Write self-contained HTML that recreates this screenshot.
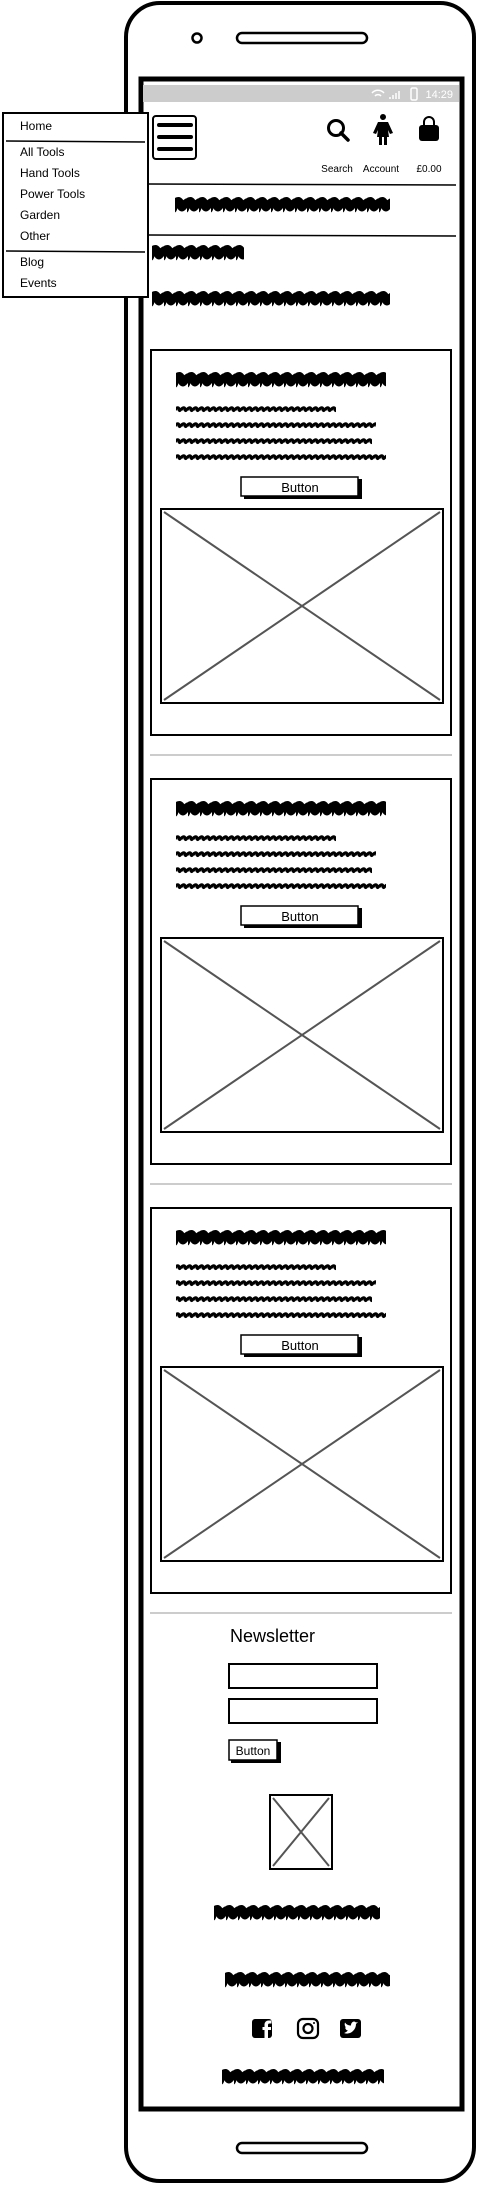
<!DOCTYPE html>
<html><head><meta charset="utf-8"><style>
html,body{margin:0;padding:0;background:#fff;width:478px;height:2187px;overflow:hidden}
svg{display:block}
text{font-family:"Liberation Sans",sans-serif;fill:#000}
</style></head><body>
<svg width="478" height="2187" viewBox="0 0 478 2187" xmlns="http://www.w3.org/2000/svg">
<defs>
<pattern id="big" x="0" y="0" width="12" height="22" patternUnits="userSpaceOnUse">
<path d="M-2,15 C1,5 5,5 6,12 C7,17 10,7 14,8" stroke="#000" stroke-width="8" fill="none" stroke-linecap="round"/>
</pattern>
<pattern id="sm" x="0" y="0" width="6" height="8" patternUnits="userSpaceOnUse">
<path d="M-1,5 C1,2 3,2 3,5 C4,7 5,3 7,3" stroke="#000" stroke-width="3" fill="none"/>
</pattern>
<g id="card">
<rect x="151" y="350" width="300" height="385" fill="#fff" stroke="#000" stroke-width="2"/>
<svg x="176" y="369" width="210" height="22" overflow="hidden"><rect width="210" height="22" fill="url(#big)"/></svg>
<svg x="176" y="405" width="160" height="8" overflow="hidden"><rect width="160" height="8" fill="url(#sm)"/></svg>
<svg x="176" y="421" width="200" height="8" overflow="hidden"><rect width="200" height="8" fill="url(#sm)"/></svg>
<svg x="176" y="437" width="196" height="8" overflow="hidden"><rect width="196" height="8" fill="url(#sm)"/></svg>
<svg x="176" y="453" width="210" height="8" overflow="hidden"><rect width="210" height="8" fill="url(#sm)"/></svg>
<rect x="244" y="479" width="118" height="20" fill="#000"/>
<rect x="241" y="477" width="117" height="19" fill="#fff" stroke="#000" stroke-width="1.5"/>
<text x="300" y="492" font-size="13" text-anchor="middle">Button</text>
<rect x="161" y="509" width="282" height="194" fill="#fff" stroke="#000" stroke-width="2"/>
<path d="M164,512 L440,700 M440,512 L164,700" stroke="#555" stroke-width="2"/>
<line x1="150" y1="755" x2="452" y2="755" stroke="#ccc" stroke-width="2"/>
</g>
</defs>

<rect x="126" y="3" width="348" height="2178" rx="34" fill="#fff" stroke="#000" stroke-width="4"/>
<circle cx="197" cy="38" r="4.5" fill="none" stroke="#000" stroke-width="2.5"/>
<rect x="237" y="33" width="130" height="10" rx="5" fill="none" stroke="#000" stroke-width="2.5"/>
<rect x="237" y="2143" width="130" height="10" rx="5" fill="none" stroke="#000" stroke-width="2.5"/>
<rect x="141" y="79" width="321" height="2030" fill="#fff" stroke="#000" stroke-width="5"/>
<rect x="143" y="85" width="316" height="17" fill="#ccc"/>
<text x="453" y="98" font-size="11" text-anchor="end" style="fill:#fff">14:29</text>
<path d="M372,93 a8,8 0 0 1 12,0 M375,96 a4,4 0 0 1 6,0" stroke="#fff" stroke-width="1.5" fill="none"/>
<path d="M390,99 v-2 M393,99 v-4 M396,99 v-6 M399,99 v-8" stroke="#fff" stroke-width="1.5"/>
<rect x="411" y="88" width="6" height="12" rx="1.5" fill="none" stroke="#fff" stroke-width="1.5"/>

<rect x="153" y="116" width="43" height="43" rx="3" fill="#fff" stroke="#000" stroke-width="2"/>
<path d="M159,125 h32 M159,137 h32 M159,149 h32" stroke="#000" stroke-width="4" stroke-linecap="round"/>
<circle cx="336" cy="128" r="7.5" fill="none" stroke="#000" stroke-width="3"/>
<path d="M341,133 l7,7" stroke="#000" stroke-width="3.5" stroke-linecap="round"/>
<circle cx="383" cy="117" r="3" fill="#000"/>
<path d="M378,122 h10 l5,11 l-3,1 l-2,-4 l1,7 h-2 v8 h-3 v-8 h-2 v8 h-3 v-8 h-2 l1,-7 l-2,4 l-3,-1 z" fill="#000"/>
<path d="M424,126 v-4 a5,5 0 0 1 10,0 v4" fill="none" stroke="#000" stroke-width="2"/>
<rect x="419" y="125" width="20" height="16" rx="3" fill="#000"/>
<text x="337" y="172" font-size="10" text-anchor="middle">Search</text>
<text x="381" y="172" font-size="10" text-anchor="middle">Account</text>
<text x="429" y="172" font-size="10" text-anchor="middle">£0.00</text>
<line x1="148" y1="184" x2="456" y2="185" stroke="#000" stroke-width="1.5"/>
<svg x="175" y="194" width="215" height="22" overflow="hidden"><rect width="215" height="22" fill="url(#big)"/></svg>
<line x1="148" y1="235" x2="456" y2="236" stroke="#000" stroke-width="1.5"/>
<svg x="152" y="242" width="92" height="22" overflow="hidden"><rect width="92" height="22" fill="url(#big)"/></svg>
<svg x="152" y="288" width="238" height="22" overflow="hidden"><rect width="238" height="22" fill="url(#big)"/></svg>

<use href="#card"/>
<use href="#card" transform="translate(0,429)"/>
<use href="#card" transform="translate(0,858)"/>

<text x="230" y="1642" font-size="18">Newsletter</text>
<rect x="229" y="1664" width="148" height="24" fill="#fff" stroke="#000" stroke-width="2"/>
<rect x="229" y="1699" width="148" height="24" fill="#fff" stroke="#000" stroke-width="2"/>
<rect x="231" y="1742" width="50" height="21" fill="#000"/>
<rect x="229" y="1740" width="48" height="20" fill="#fff" stroke="#000" stroke-width="1.5"/>
<text x="253" y="1755" font-size="12" text-anchor="middle">Button</text>
<rect x="270" y="1795" width="62" height="74" fill="#fff" stroke="#000" stroke-width="2"/>
<path d="M273,1798 L329,1866 M329,1798 L273,1866" stroke="#555" stroke-width="2"/>
<svg x="214" y="1902" width="166" height="22" overflow="hidden"><rect width="166" height="22" fill="url(#big)"/></svg>
<svg x="225" y="1969" width="165" height="22" overflow="hidden"><rect width="165" height="22" fill="url(#big)"/></svg>
<g transform="translate(0,47)">
<rect x="252" y="1972" width="20" height="19" rx="3" fill="#000"/>
<path d="M268,1991 v-8 h3 v-3 h-3 v-2 a1.5,1.5 0 0 1 1.5,-1.5 h2 v-3 h-3 a4,4 0 0 0 -4,4 v2.5 h-2 v3 h2 v8 z" fill="#fff"/>
<rect x="298" y="1972" width="20" height="19" rx="5" fill="none" stroke="#000" stroke-width="2.2"/>
<circle cx="308" cy="1981.5" r="4.5" fill="none" stroke="#000" stroke-width="2.2"/>
<circle cx="314" cy="1976" r="1" fill="#000"/>
<rect x="340" y="1972" width="21" height="19" rx="3" fill="#000"/>
<path d="M344,1986 q5,2 9,-2 q3,-3 3,-7 l2,-2 l-2,0.5 q-2,-2 -4,0 q-1,1 -1,3 q-4,0 -6,-3 q-1,3 1,5 l-1,0 q1,3 3,3 q-2,2 -4,2.5 z" fill="#fff"/>
</g>
<svg x="222" y="2066" width="162" height="22" overflow="hidden"><rect width="162" height="22" fill="url(#big)"/></svg>

<rect x="3" y="113" width="145" height="184" fill="#fff" stroke="#000" stroke-width="2"/>
<g font-size="12">
<text x="20" y="130">Home</text>
<text x="20" y="156">All Tools</text>
<text x="20" y="177">Hand Tools</text>
<text x="20" y="198">Power Tools</text>
<text x="20" y="219">Garden</text>
<text x="20" y="240">Other</text>
<text x="20" y="266">Blog</text>
<text x="20" y="287">Events</text>
</g>
<line x1="6" y1="141" x2="145" y2="142" stroke="#000" stroke-width="1.5"/>
<line x1="6" y1="251" x2="145" y2="252" stroke="#000" stroke-width="1.5"/>
</svg>
</body></html>
